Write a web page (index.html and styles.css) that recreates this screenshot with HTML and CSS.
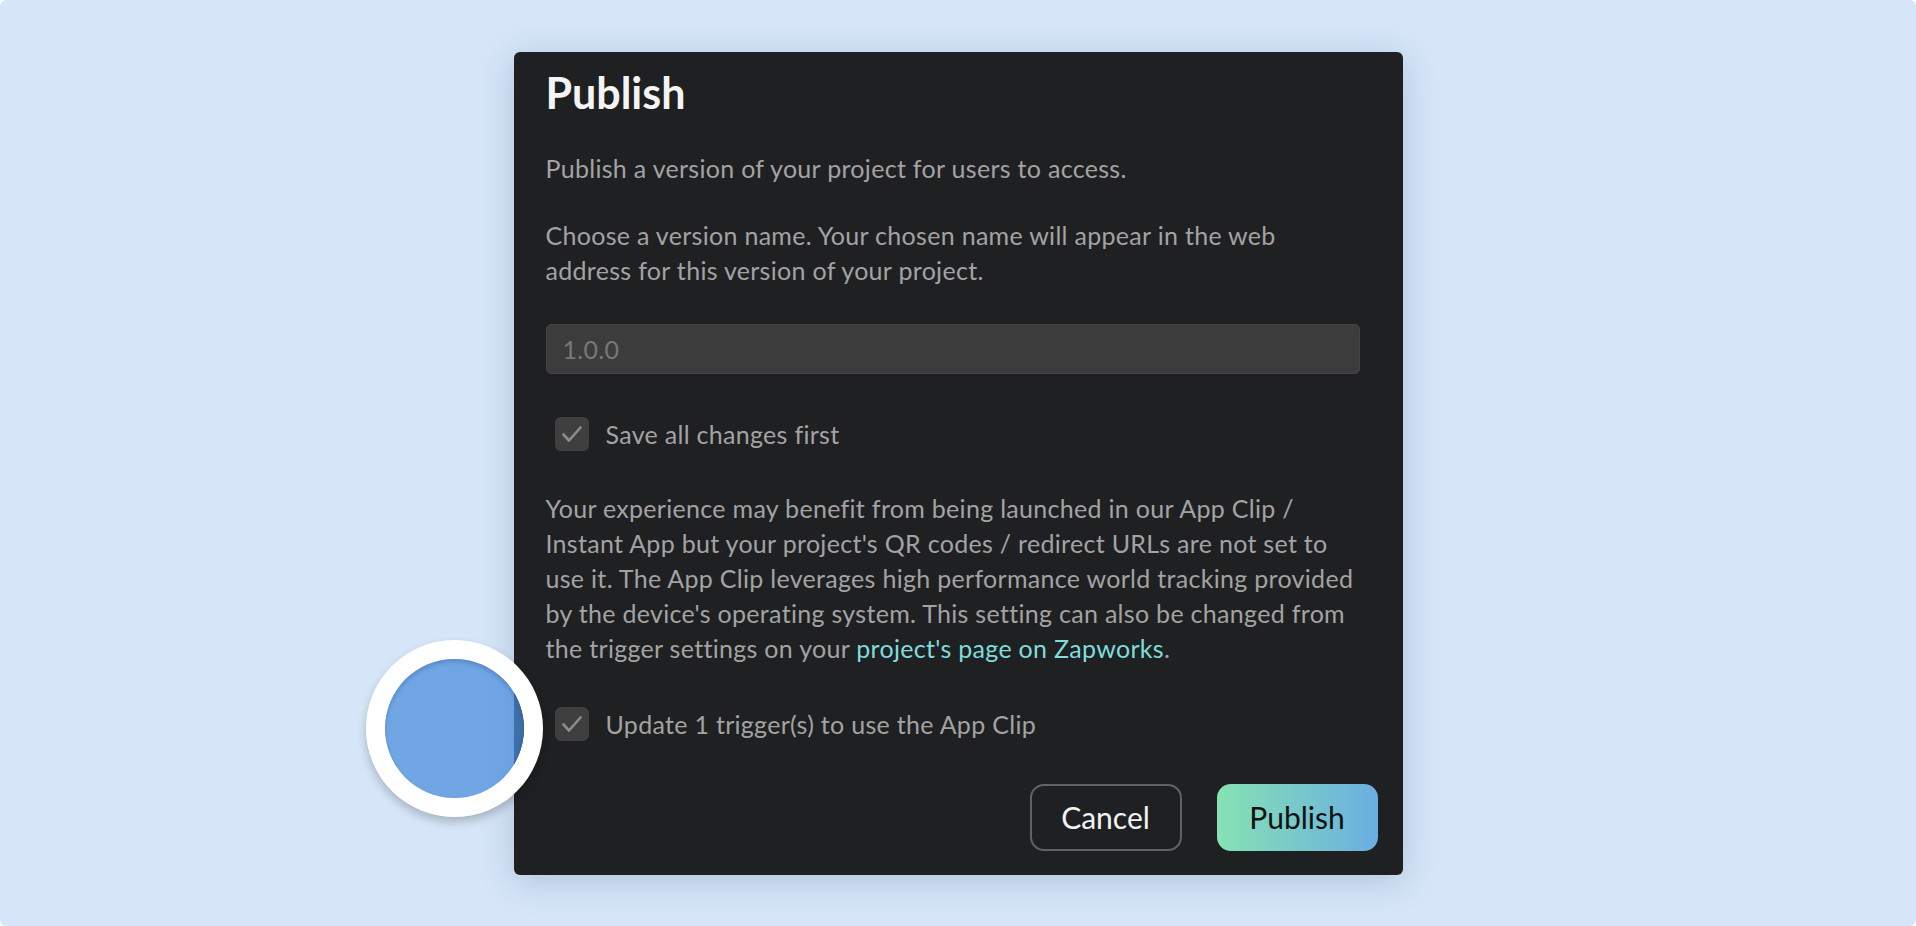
FILE: index.html
```html
<!doctype html>
<html>
  <head>
    <title>Publish</title>
    <link rel="stylesheet" href="styles.css">
  </head>
  <body>
    <div class="page">
      <div class="modal">
        <h1>Publish</h1>
        <p>Publish a version of your project for users to access.</p>
        <p>Choose a version name. Your chosen name will appear in the web address for this version of your project.</p>
        <input class="version-input" type="text" placeholder="1.0.0">
        <label class="check-row">
          <span class="checkbox">
            <svg viewBox="0 0 34 34" width="34" height="34"><polyline points="8.5,17.5 14,23.5 25.5,10.5" fill="none" stroke="#8d8d8d" stroke-width="2.6" stroke-linecap="round" stroke-linejoin="round"/></svg>
          </span>
          Save all changes first
        </label>
        <p class="app-clip">Your experience may benefit from being launched in our App Clip / Instant App but your project's QR codes / redirect URLs are not set to use it. The App Clip leverages high performance world tracking provided by the device's operating system. This setting can also be changed from the trigger settings on your <a href="#">project's page on Zapworks</a>.</p>
        <label class="check-row trigger-row">
          <span class="checkbox">
            <svg viewBox="0 0 34 34" width="34" height="34"><polyline points="8.5,17.5 14,23.5 25.5,10.5" fill="none" stroke="#8d8d8d" stroke-width="2.6" stroke-linecap="round" stroke-linejoin="round"/></svg>
          </span>
          Update 1 trigger(s) to use the App Clip
        </label>
        <div class="buttons">
          <button class="cancel_button">Cancel</button>
          <button class="publish_button">Publish</button>
        </div>
      </div>
      <div class="pointer"><div class="pointer-inner"></div></div>
    </div>
  </body>
</html>
```
FILE: styles.css
```css
html {
  background-color: #ffffff;
}
body {
  margin: 0;
  font-family: Lato, "Open Sans", sans-serif;
}
.page {
  position: relative;
  height: 926px;
  background-color: #d6e6f8;
  border-radius: 6px;
  display: flex;
  align-items: center;
  justify-content: center;
  overflow: hidden;
}
.modal {
  width: 832px;
  padding: 15px 25px 24px 32px;
  background-color: #1f2022;
  border-radius: 6px;
  box-shadow: 0 6px 34px rgba(40, 70, 120, 0.22);
}
.modal h1 {
  margin: 0;
  font-size: 43px;
  line-height: 52px;
  font-weight: bold;
  color: #f4f4f4;
}
.modal p {
  width: 814px;
  margin: 32px 0 0;
  font-size: 25px;
  letter-spacing: 0.3px;
  line-height: 35px;
  color: #a3a3a3;
}
.modal a {
  color: #7fdcdc;
  text-decoration: none;
}
.version-input {
  display: block;
  box-sizing: border-box;
  width: 814px;
  height: 50px;
  margin-top: 36px;
  padding: 0 16px;
  font-family: Lato, sans-serif;
  font-size: 25px;
  letter-spacing: 0.3px;
  color: #cfcfcf;
  background-color: #3c3c3d;
  border: 1px solid #444446;
  border-radius: 5px;
  outline: none;
}
.version-input::placeholder {
  color: #777777;
}
.check-row {
  display: flex;
  align-items: center;
  margin-top: 43px;
  padding-left: 9px;
  height: 35px;
  font-size: 25px;
  letter-spacing: 0.3px;
  color: #a3a3a3;
}
.checkbox {
  width: 34px;
  height: 34px;
  margin-right: 17px;
  background-color: #3f3f40;
  border-radius: 6px;
  display: flex;
}
.modal p.app-clip {
  margin-top: 39px;
}
.trigger-row {
  margin-top: 41px;
}
.buttons {
  display: flex;
  justify-content: flex-end;
  margin-top: 42px;
}
.buttons button {
  height: 67px;
  font-family: Lato, sans-serif;
  font-size: 30px;
  border-radius: 14px;
  cursor: pointer;
}
.cancel_button {
  width: 152px;
  margin-right: 35px;
  color: #f2f2f2;
  background: transparent;
  border: 2px solid #626264;
}
.publish_button {
  width: 161px;
  color: #111111;
  border: none;
  background: linear-gradient(90deg, #86e2b4, #6aaee2);
}
.pointer {
  position: absolute;
  left: 366px;
  top: 640px;
  width: 177px;
  height: 177px;
  border-radius: 50%;
  box-shadow: 0 0 0 19px #ffffff inset, 0 5px 10px rgba(0, 0, 0, 0.22);
  display: flex;
  align-items: center;
  justify-content: center;
}
.pointer-inner {
  width: 139px;
  height: 139px;
  border-radius: 50%;
  background-color: rgba(74, 141, 222, 0.72);
  box-shadow: inset 0 3px 4px rgba(20, 50, 110, 0.25);
}
```
